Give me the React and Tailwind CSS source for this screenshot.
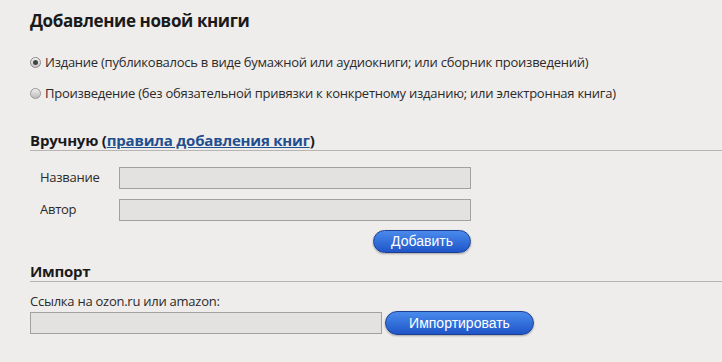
export default function App() {
    return (
        <div className="w-[722px] h-[362px] overflow-hidden bg-[#efedeb] text-[#2a2a2a] font-['Open_Sans',sans-serif] tracking-[-0.25px]">
            <div className="pl-[30px] pt-[9px]">
                <h1 className="text-[17px] font-bold leading-[24px] tracking-[-0.4px] text-[#1a1a1a]">
                    Добавление новой книги
                </h1>

                <div className="mt-[21px] flex flex-col gap-[15px] text-[13px] leading-[16px]">
                    <label className="flex items-center gap-[4px]">
                        <span className="w-[11px] h-[11px] rounded-full border border-[#8a8886] bg-gradient-to-b from-[#f4f3f2] to-[#c8c6c4] flex items-center justify-center">
                            <span className="w-[5px] h-[5px] rounded-full bg-[#444]" />
                        </span>
                        Издание (публиковалось в виде бумажной или аудиокниги; или сборник произведений)
                    </label>
                    <label className="flex items-center gap-[4px]">
                        <span className="w-[11px] h-[11px] rounded-full border border-[#9a9896] bg-gradient-to-b from-[#f0efee] to-[#bebcba]" />
                        Произведение (без обязательной привязки к конкретному изданию; или электронная книга)
                    </label>
                </div>

                <div className="mt-[29px] border-b border-[#b8b4b2]">
                    <h2 className="text-[15px] font-bold leading-[20px] tracking-[-0.2px] text-[#1a1a1a]">
                        Вручную (
                        <a href="#" className="text-[#1f4f8f] underline">правила добавления книг</a>
                        )
                    </h2>
                </div>

                <div className="mt-[16px] flex flex-col gap-[10px] text-[13px]">
                    <div className="flex items-center">
                        <span className="w-[89px] pl-[10px]">Название</span>
                        <div className="w-[352px] h-[22px] bg-[#e4e2e0] border border-[#a4a09e]" />
                    </div>
                    <div className="flex items-center">
                        <span className="w-[89px] pl-[10px]">Автор</span>
                        <div className="w-[352px] h-[22px] bg-[#e4e2e0] border border-[#a4a09e]" />
                    </div>
                </div>

                <div className="w-[441px] flex justify-end mt-[9px]">
                    <button className="w-[98px] h-[23px] rounded-full border border-[#1d3f93] bg-gradient-to-b from-[#4a8aec] to-[#1f55c8] text-white text-[14px] tracking-normal font-['Liberation_Sans',sans-serif] shadow-[0_1px_2px_rgba(0,0,0,0.3)]">
                        Добавить
                    </button>
                </div>

                <div className="mt-[8px] border-b border-[#b8b4b2]">
                    <h2 className="text-[15px] font-bold leading-[20px] text-[#1a1a1a]">Импорт</h2>
                </div>

                <div className="mt-[11px] text-[13px] leading-[16px]">Ссылка на ozon.ru или amazon:</div>
                <div className="mt-[2px] flex items-center gap-[3px]">
                    <div className="w-[352px] h-[22px] bg-[#e4e2e0] border border-[#a4a09e]" />
                    <button className="w-[149px] h-[24px] rounded-full border border-[#1d3f93] bg-gradient-to-b from-[#4a8aec] to-[#1f55c8] text-white text-[14px] tracking-normal font-['Liberation_Sans',sans-serif] shadow-[0_1px_2px_rgba(0,0,0,0.3)]">
                        Импортировать
                    </button>
                </div>
            </div>
        </div>
    );
}
